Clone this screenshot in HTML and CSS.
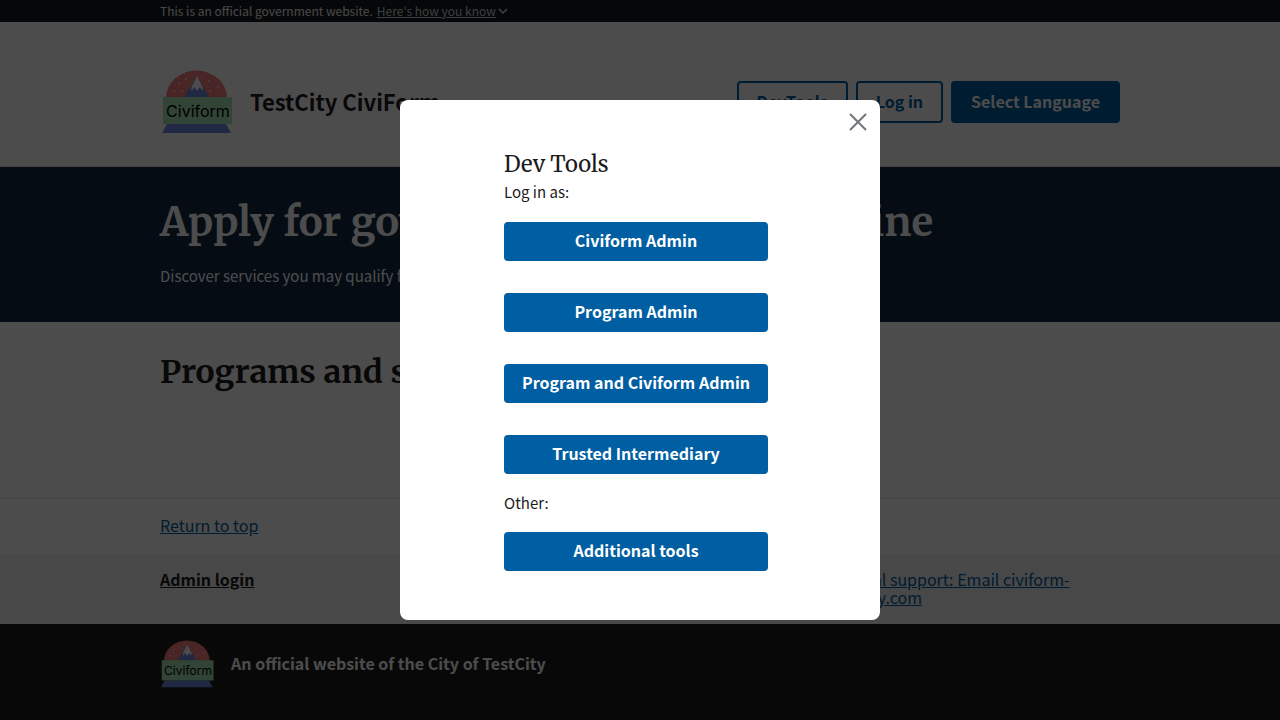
FILE: index.html
```html
<!DOCTYPE html>
<html lang="en">
<head>
<meta charset="utf-8">
<title>TestCity CiviForm</title>
<link rel="stylesheet" href="styles.css">
</head>
<body>
<svg class="defs" aria-hidden="true">
  <symbol id="logo" viewBox="0 0 72 64">
    <path d="M4 28a30 27 0 0 1 61 0z" fill="#f47c7c"/>
    <path d="M22 27 35 6l12 21z" fill="#6f86e0"/>
    <path d="m29 18 6-12 6 12-1 3-2-4-3 4-3-4-2 4z" fill="#fff"/>
    <g fill="#f9d6d0"><circle cx="12" cy="21" r="1"/><circle cx="17" cy="13" r="1"/><circle cx="20" cy="21" r="1"/><circle cx="24" cy="9" r="1"/><circle cx="47" cy="11" r="1"/><circle cx="48" cy="21" r="1"/><circle cx="56" cy="17" r="1"/></g>
    <path d="M5 54h59l5 9H0z" fill="#7086df"/>
    <path d="M1 27h69v27H1z" fill="#a3e4b5"/>
    <text x="36" y="47" class="logo-text" text-anchor="middle">Civiform</text>
  </symbol>
</svg>

<div class="banner">
  <div class="container banner-row">
    <span>This is an official government website.</span>
    <button type="button" class="banner-link">Here's how you know</button>
    <svg class="chevron" viewBox="0 0 10 10" aria-hidden="true"><path d="m1 3 4 4 4-4"/></svg>
  </div>
</div>

<header class="header">
  <div class="container header-row">
    <svg class="logo" aria-hidden="true"><use href="#logo"/></svg>
    <a href="#" class="site-name">TestCity CiviForm</a>
    <nav class="actions">
      <button type="button" class="btn btn-outline">DevTools</button>
      <button type="button" class="btn btn-outline">Log in</button>
      <button type="button" class="btn">Select Language</button>
    </nav>
  </div>
</header>

<main>
  <section class="hero">
    <div class="container">
      <h1>Apply for government programs online</h1>
      <p>Discover services you may qualify for and apply in minutes.</p>
    </div>
  </section>
  <section class="container programs">
    <h2>Programs and services</h2>
  </section>
</main>

<footer>
  <div class="return"><div class="container"><a href="#">Return to top</a></div></div>
  <div class="footer-nav">
    <div class="container footer-row">
      <a href="#" class="admin">Admin login</a>
      <a href="#" class="support">For technical support: Email civiform-team@exygy.com</a>
    </div>
  </div>
  <div class="identifier">
    <div class="container identifier-row">
      <svg class="logo-small" aria-hidden="true"><use href="#logo"/></svg>
      <span>An official website of the City of TestCity</span>
    </div>
  </div>
</footer>

<div class="overlay">
  <div class="modal" role="dialog" aria-modal="true" aria-labelledby="modal-title">
    <button type="button" class="close" aria-label="Close">
      <svg viewBox="0 0 18 18" aria-hidden="true"><path d="m1 1 16 16M17 1 1 17"/></svg>
    </button>
    <div class="modal-body">
      <h3 id="modal-title">Dev Tools</h3>
      <p class="login-as">Log in as:</p>
      <div class="stack">
        <button type="button" class="btn btn-wide">Civiform Admin</button>
        <button type="button" class="btn btn-wide">Program Admin</button>
        <button type="button" class="btn btn-wide">Program and Civiform Admin</button>
        <button type="button" class="btn btn-wide">Trusted Intermediary</button>
      </div>
      <p class="other">Other:</p>
      <div class="stack">
        <button type="button" class="btn btn-wide">Additional tools</button>
      </div>
    </div>
  </div>
</div>
</body>
</html>
```
FILE: styles.css
```css
* { box-sizing: border-box; }
body {
  margin: 0;
  background: #fff;
  color: #1b1b1b;
  font: 15px/24px "Source Sans Pro", "Noto Sans CJK SC", sans-serif;
}
h1, h2, h3, p { margin: 0; }
h1, h2, h3 { font-family: Merriweather, "DejaVu Serif Condensed", "DejaVu Serif", serif; }
a { color: #005ea2; }
button { font: inherit; cursor: pointer; }
.defs { display: none; }
.container { max-width: 960px; margin: 0 auto; }

.banner { background: #16191c; color: #f0f0f0; font-size: 12px; line-height: 22px; }
.banner-row { display: flex; align-items: center; }
.banner-link {
  margin-left: 4px;
  padding: 0;
  border: 0;
  background: none;
  color: #c5d4db;
  line-height: 22px;
  text-decoration: underline;
}
.chevron { width: 10px; height: 10px; margin-left: 2px; fill: none; stroke: #dfe1e2; stroke-width: 1.5; }

.header { padding: 48px 0 32px; border-bottom: 1px solid #dfe1e2; }
.header-row { display: flex; align-items: center; height: 64px; }
.logo { width: 72px; height: 64px; margin-left: 2px; }
.logo-text { font: 16px Inter, sans-serif; fill: #000; }
.site-name { margin-left: 16px; padding-bottom: 2px; color: #1b1b1b; font-size: 22px; font-weight: 700; text-decoration: none; }
.actions { display: flex; gap: 8px; margin-left: auto; }
.btn {
  padding: 8px 20px 10px;
  border: 0;
  border-radius: 4px;
  background: #005ea2;
  color: #fff;
  font-size: 16px;
  font-weight: 700;
  white-space: nowrap;
}
.btn-outline { background: none; color: #005ea2; box-shadow: inset 0 0 0 2px #005ea2; }

.hero { padding: 32px 0; background: #112845; color: #fff; }
.hero h1 { font-size: 40px; line-height: 47px; }
.hero p { margin-top: 18px; line-height: 24px; padding-bottom: 2px; }
.programs { padding: 28px 0 104px; }
.programs h2 { font-size: 32px; line-height: 44px; }

.return { padding: 14px 0 18px; border-top: 1px solid #dfe1e2; font-size: 16px; }
.footer-nav { padding: 15px 0 17px; background: #f0f0f0; font-size: 16px; line-height: 18px; }
.footer-row { display: flex; justify-content: space-between; min-height: 37px; }
.admin { color: #1b1b1b; font-weight: 700; }
.support { flex: 0 1 330px; }
.identifier { padding: 16px 0 32px; background: #1b1b1b; color: #fff; font-size: 16px; font-weight: 700; }
.identifier-row { display: flex; align-items: center; gap: 16px; }
.identifier-row span { padding-bottom: 2px; }
.logo-small { width: 54px; height: 48px; margin-left: 1px; }

.overlay {
  position: fixed;
  inset: 0;
  display: flex;
  align-items: center;
  justify-content: center;
  background: rgba(0, 0, 0, 0.7);
}
.modal { width: 480px; border-radius: 8px; background: #fff; }
.close { display: block; margin: 9px 9px 0 auto; padding: 4px; border: 0; background: none; }
.close svg { display: block; width: 18px; height: 18px; fill: none; stroke: #71767a; stroke-width: 2; }
.modal-body { width: 264px; margin: 0 112px 48px 104px; padding: 14px 0 1px; }
.modal-body h3 { margin-bottom: 1px; font-size: 22px; font-weight: 400; line-height: 30px; }
.login-as { margin-bottom: 18px; }
.other { margin: 17px 0; }
.stack { display: grid; gap: 32px; }
.btn-wide { padding: 6px 8px 9px; }
```
